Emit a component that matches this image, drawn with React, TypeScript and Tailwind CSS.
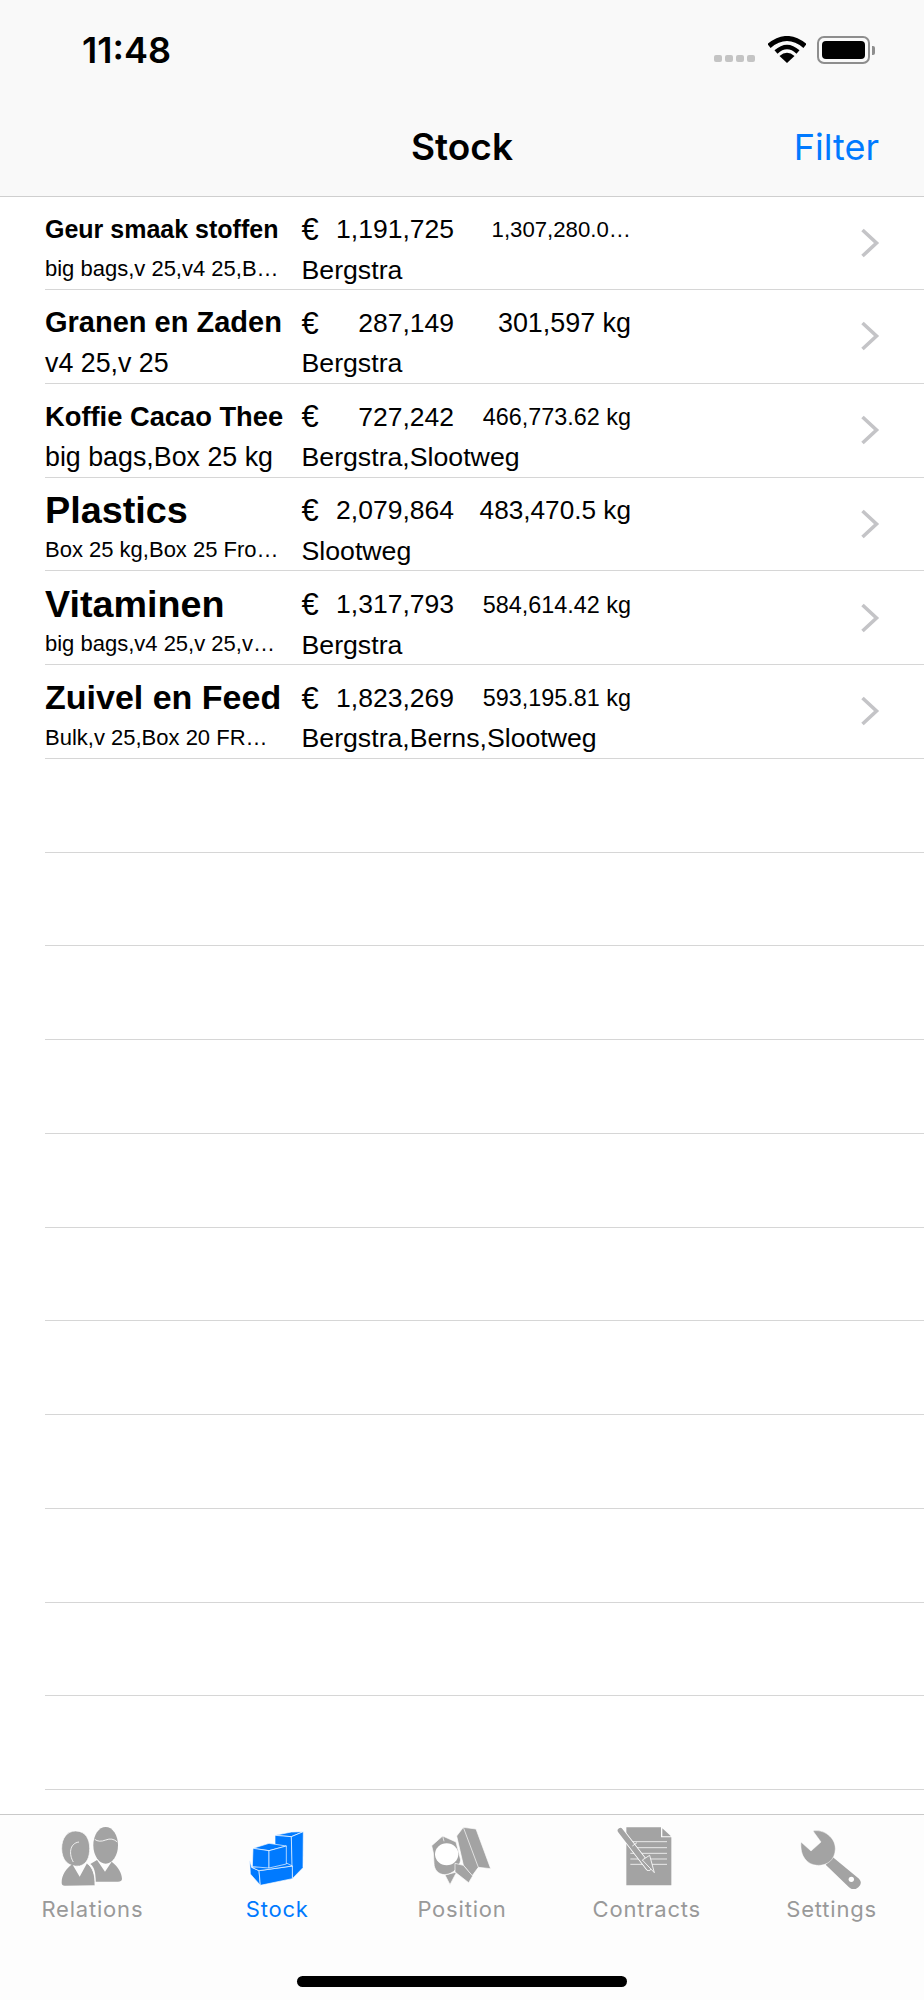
const sans = { fontFamily: '"Liberation Sans", Arial, sans-serif' }

const rows = [
  { name: 'Geur smaak stoffen', nameCls: 'text-[25px]', sub: 'big bags,v 25,v4 25,B…', subCls: 'text-[22px] pb-[3px]', value: '1,191,725', qty: '1,307,280.0…', qtyCls: 'text-[22.2px]', place: 'Bergstra' },
  { name: 'Granen en Zaden', nameCls: 'text-[29px]', sub: 'v4 25,v 25', subCls: 'text-[26.8px] pb-[1px]', value: '287,149', qty: '301,597 kg', qtyCls: 'text-[26.9px]', place: 'Bergstra' },
  { name: 'Koffie Cacao Thee', nameCls: 'text-[27.3px] pt-[1px]', sub: 'big bags,Box 25 kg', subCls: 'text-[26.8px] pb-[1px]', value: '727,242', qty: '466,773.62 kg', qtyCls: 'text-[23.4px] pt-[2px]', place: 'Bergstra,Slootweg' },
  { name: 'Plastics', nameCls: 'text-[37.8px]', sub: 'Box 25 kg,Box 25 Fro…', subCls: 'text-[22px] pb-[3px]', value: '2,079,864', qty: '483,470.5 kg', qtyCls: 'text-[26.2px]', place: 'Slootweg' },
  { name: 'Vitaminen', nameCls: 'text-[37.7px]', sub: 'big bags,v4 25,v 25,v…', subCls: 'text-[22px] pb-[3px]', value: '1,317,793', qty: '584,614.42 kg', qtyCls: 'text-[23.4px] pt-[2px]', place: 'Bergstra' },
  { name: 'Zuivel en Feed', nameCls: 'text-[34px] pb-[2px]', sub: 'Bulk,v 25,Box 20 FR…', subCls: 'text-[22px] pb-[3px]', value: '1,823,269', qty: '593,195.81 kg', qtyCls: 'text-[23.4px] pt-[2px]', place: 'Bergstra,Berns,Slootweg' },
]

function StatusIcons() {
  return (
    <div className="flex items-center">
      <div className="flex gap-[3px] mt-[17px] mr-[13px]">
        <span className="w-[8px] h-[7px] rounded-[2px] bg-[#c4c4c4]" />
        <span className="w-[8px] h-[7px] rounded-[2px] bg-[#c4c4c4]" />
        <span className="w-[8px] h-[7px] rounded-[2px] bg-[#c4c4c4]" />
        <span className="w-[8px] h-[7px] rounded-[2px] bg-[#c4c4c4]" />
      </div>
      <svg width="38" height="28" viewBox="0 0 38 28" className="mr-[11px]">
        <path d="M1 10 Q19 -5 37 10" fill="none" stroke="#000" strokeWidth="5" />
        <path d="M8 16 Q19 6 30 16" fill="none" stroke="#000" strokeWidth="4.5" />
        <path d="M19 27 L11.5 20 Q19 13.5 26.5 20 Z" fill="#000" />
      </svg>
      <div className="w-[53px] h-[28px] rounded-[7px] border-[2px] border-[#8e8e8e] p-[3px]">
        <div className="w-full h-full rounded-[4px] bg-black" />
      </div>
      <span className="w-[3px] h-[9px] ml-[2px] rounded-r-[2px] bg-[#8e8e8e]" />
    </div>
  )
}

function Chevron() {
  return (
    <svg width="20" height="30" viewBox="0 0 20 30">
      <path d="M2.5 2 L16.5 15 L2.5 28" fill="none" stroke="#c4c4c7" strokeWidth="3.6" />
    </svg>
  )
}

// tab icons are drawn at 192 units to 64px
function RelationsIcon() {
  return (
    <svg width="64" height="64" viewBox="181 135 192 192">
      <ellipse cx="318" cy="196" rx="37" ry="55" fill="#a3a3a3" />
      <path d="M285 178 Q298 188 318 180 Q338 172 353 186" fill="none" stroke="#fff" strokeWidth="2.5" />
      <path d="M272 252 L292 240 L316 275 L336 245 C356 260 367 280 367 297 Q366 305 355 305 L288 305 C288 280 285 262 272 252 Z" fill="#a3a3a3" />
      <path d="M228 153 C258 153 270 178 270 205 C270 232 262 252 240 258 C205 262 186 240 186 205 C186 175 202 153 228 153 Z" fill="#a3a3a3" stroke="#fff" strokeWidth="2" />
      <path d="M221 246 C208 225 208 190 238 186" fill="none" stroke="#fff" strokeWidth="2.5" />
      <path d="M186 308 C186 285 200 265 218 253 L240 290 L262 250 C280 262 286 285 286 316 L195 317 Q186 317 186 308 Z" fill="#a3a3a3" />
      <path d="M262 250 C280 262 287 285 286 316" fill="none" stroke="#fff" strokeWidth="2.5" />
    </svg>
  )
}

function StockIcon() {
  return (
    <svg width="64" height="64" viewBox="736 135 192 192">
      <g fill="#007aff" stroke="#fff" strokeWidth="2" strokeLinejoin="round">
        <path d="M826 166 L875 156 L911 155 L875 170 Z" />
        <path d="M826 166 L875 170 L878 258 L826 258 Z" />
        <path d="M875 170 L911 155 L910 263 L878 296 Z" />
        <path d="M750 240 L752 282 L782 316 L778 272 L756 262 Z" />
        <path d="M778 272 L878 258 L878 296 L782 316 Z" />
        <path d="M756 262 L778 272 L878 258 L862 250 Z" />
        <path d="M760 205 L808 190 L860 198 L808 212 Z" />
        <path d="M760 205 L808 212 L808 264 L758 260 Z" />
        <path d="M808 212 L860 198 L860 252 L808 264 Z" />
      </g>
    </svg>
  )
}

function PositionIcon() {
  return (
    <svg width="64" height="64" viewBox="90 135 192 192">
      <g fill="#a3a3a3" stroke="#fff" strokeWidth="2" strokeLinejoin="round">
        <path d="M170 168 L190 142 L228 147 L272 266 L235 262 L216 288 L190 255 Z" />
        <path d="M190 142 L235 262" fill="none" />
        <path d="M135 285 L170 276 L150 314 Z" />
        <path d="M95 197 L128 168 L168 186 L182 240 C178 262 160 282 135 284 C116 284 102 270 102 250 L100 218 Z" />
        <path d="M128 168 L132 184" fill="none" />
        <path d="M165 250 L190 256 L218 288 L206 308 L165 276 Z" />
      </g>
      <ellipse cx="140" cy="223" rx="35" ry="33" fill="#fff" />
    </svg>
  )
}

function ContractsIcon() {
  return (
    <svg width="64" height="64" viewBox="644 135 192 192">
      <path d="M678 142 L782 142 L782 172 L813 172 L813 316 L678 316 Z" fill="#a3a3a3" />
      <path d="M786 145 L812 169 L786 169 Z" fill="#a3a3a3" />
      <g stroke="#e8e8e8" strokeWidth="3">
        <path d="M690 185 L800 185" />
        <path d="M690 203 L800 203" />
        <path d="M690 220 L800 220" />
        <path d="M690 237 L800 237" />
        <path d="M690 253 L800 253" />
      </g>
      <path d="M660 152 L745 262" stroke="#fff" strokeWidth="21" strokeLinecap="round" />
      <path d="M660 152 L745 262" stroke="#a3a3a3" strokeWidth="16" strokeLinecap="round" />
      <path d="M696 198 L710 188" stroke="#fff" strokeWidth="2.5" />
      <path d="M726 240 L748 226 L762 278 Z" fill="#a3a3a3" stroke="#fff" strokeWidth="2.5" strokeLinejoin="round" />
    </svg>
  )
}

function SettingsIcon() {
  return (
    <svg width="64" height="64" viewBox="1199 135 192 192">
      <path d="M1296 230 L1376 296 Q1388 310 1374 322 Q1360 334 1346 322 L1276 254 Z" fill="#a3a3a3" />
      <path d="M1238 153 C1268 146 1306 172 1305 207 C1304 240 1280 258 1250 256 C1220 254 1198 228 1202 186 L1232 213 L1262 186 Z" fill="#a3a3a3" stroke="#fff" strokeWidth="1.5" />
      <circle cx="1353" cy="298" r="8" fill="#fff" />
    </svg>
  )
}

const tabs = [
  { label: 'Relations', icon: <RelationsIcon />, active: false },
  { label: 'Stock', icon: <StockIcon />, active: true },
  { label: 'Position', icon: <PositionIcon />, active: false },
  { label: 'Contracts', icon: <ContractsIcon />, active: false },
  { label: 'Settings', icon: <SettingsIcon />, active: false },
]

export default function App() {
  return (
    <div className="w-[924px] h-[2000px] flex flex-col bg-white overflow-hidden text-black" style={sans}>
      <header className="h-[197px] shrink-0 bg-[#f9f9f9] border-b border-[#cfcfcf]">
        <div className="h-[100px] pl-[82px] pr-[49px] flex items-center justify-between">
          <span className="text-[36px] font-semibold" style={{ fontFamily: 'Inter, sans-serif' }}>11:48</span>
          <StatusIcons />
        </div>
        <div className="relative h-[96px] flex items-start justify-center" style={{ fontFamily: 'Inter, sans-serif' }}>
          <span className="text-[37px] leading-[46px] mt-[24px] font-semibold">Stock</span>
          <span className="absolute right-[45px] top-[24px] text-[36px] leading-[46px] text-[#007aff]">Filter</span>
        </div>
      </header>

      <div className="flex-1 overflow-hidden -mt-[0.75px]">
        {rows.map(r => (
          <div key={r.name} className="ml-[45px] h-[93.75px] border-b border-[#d6d6d6] flex">
            <div className="w-[586px] pt-[9px]">
              <div className="h-[48px] flex items-center whitespace-nowrap">
                <span className={`w-[256.5px] font-bold ${r.nameCls}`}>{r.name}</span>
                <span className="w-[152.5px] flex items-center justify-between text-[26.5px] leading-none">
                  <span className="text-[31px]">€</span>
                  <span>{r.value}</span>
                </span>
                <span className={`w-[177px] text-right ${r.qtyCls}`}>{r.qty}</span>
              </div>
              <div className="h-[33px] flex items-center whitespace-nowrap">
                <span className={`w-[256.5px] ${r.subCls}`}>{r.sub}</span>
                <span className="text-[26.7px]">{r.place}</span>
              </div>
            </div>
            <div className="flex-1 flex items-center justify-end pr-[44px]">
              <Chevron />
            </div>
          </div>
        ))}
        {Array.from({ length: 11 }).map((_, i) => (
          <div key={i} className="ml-[45px] h-[93.75px] border-b border-[#d6d6d6]" />
        ))}
      </div>

      <nav className="h-[186px] shrink-0 border-t border-[#c9c9c9] bg-[#fdfdfd]">
        <div className="grid grid-cols-5 pt-[10px]">
          {tabs.map(t => (
            <div key={t.label} className="flex flex-col items-center">
              {t.icon}
              <span
                className={`mt-[7px] text-[22px] leading-[26px] tracking-[0.8px] ${t.active ? 'text-[#007aff]' : 'text-[#999999]'}`}
                style={{ fontFamily: 'Inter, sans-serif' }}
              >
                {t.label}
              </span>
            </div>
          ))}
        </div>
        <div className="w-[330px] h-[11px] mx-auto mt-[54px] rounded-full bg-black" />
      </nav>
    </div>
  )
}
